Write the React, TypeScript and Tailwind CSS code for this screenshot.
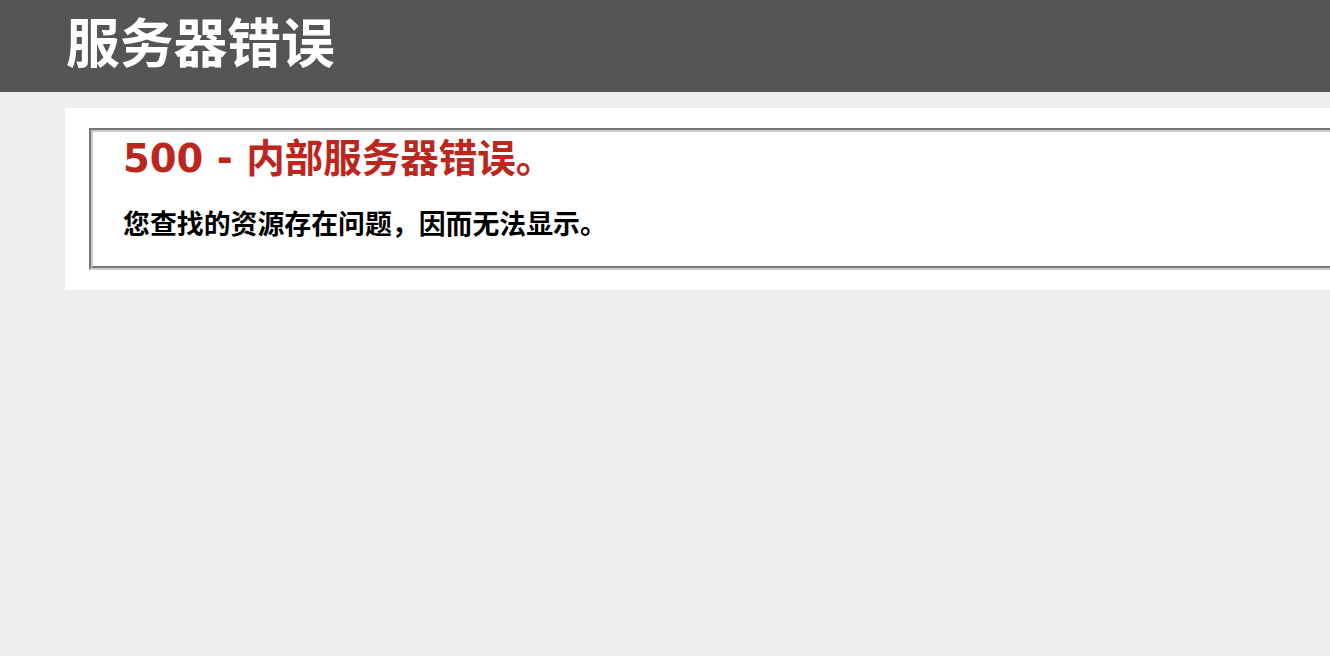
export default function App() {
  return (
    <div
      className="w-full h-screen overflow-hidden bg-[#eeeeee]"
      style={{ fontFamily: '"DejaVu Sans", Verdana, "Noto Sans CJK SC", sans-serif' }}
    >
      {/* Header */}
      <div className="bg-[#555555] h-[92px] pl-[66px] pt-[12px]">
        <h1 className="m-0 text-[53.76px] font-bold leading-[66px] text-white">服务器错误</h1>
      </div>

      {/* Content */}
      <div className="ml-[65px] mt-[16px] w-[1300px] bg-white p-[20px]">
        <fieldset className="mx-[4px] border-[4px] [border-style:groove] border-[#cccccc] px-[30px] pb-[25px]">
          <h2 className="m-0 pt-[4px] text-[38.5px] font-bold leading-[46px] text-[#bd261c]">
            500 - 内部服务器错误。
          </h2>
          <h3 className="mt-[27px] text-[26.88px] font-bold leading-[32px] text-black">
            您查找的资源存在问题，因而无法显示。
          </h3>
        </fieldset>
      </div>
    </div>
  );
}
